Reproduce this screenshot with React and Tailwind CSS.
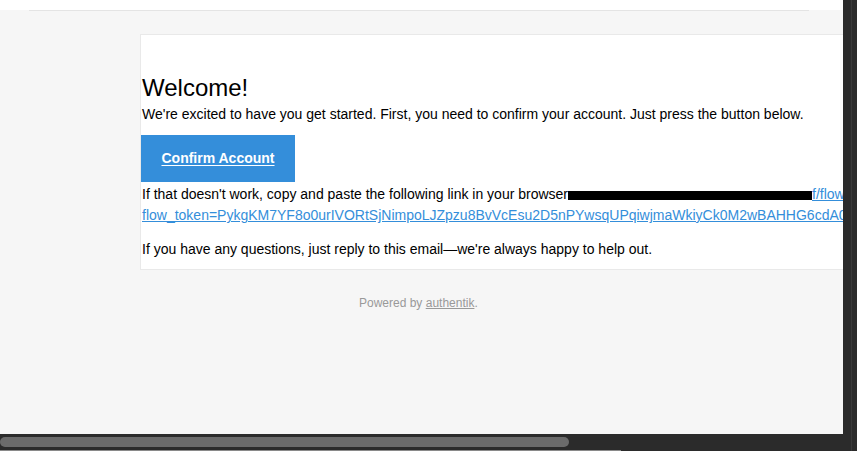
import React from 'react';

const font = { fontFamily: '"Liberation Sans", Arial, Helvetica, sans-serif' };

const App = () => {
  return (
    <div className="relative w-[857px] h-[451px] overflow-hidden bg-[#2b2b2b]" style={font}>
      {/* page viewport */}
      <div className="w-[843px] h-[434px] overflow-hidden bg-[#f6f6f6] flex flex-col">
        <div className="h-[10px] bg-white shrink-0"></div>
        <div className="ml-[29px] w-[780px] h-px bg-[#e4e4e4] shrink-0"></div>

        <div className="pt-[23px] pl-[140px] shrink-0">
          <div className="w-[760px] bg-white border border-[#e9e9e9] pt-[39px] pb-[9px] pl-px text-black whitespace-nowrap">
            <h1 className="text-[24px] leading-[28px] font-normal">Welcome!</h1>
            <p className="mt-[2px] text-[14px] leading-5">
              We're excited to have you get started. First, you need to confirm your account. Just press the button below.
            </p>
            <a
              href="#"
              className="mt-[11px] mb-[2px] -ml-px flex w-[154px] h-[47px] items-center justify-center bg-[#348eda] text-white text-[14px] font-bold underline underline-offset-2"
            >
              Confirm Account
            </a>
            <p className="text-[14px] leading-[21px]">
              If that doesn't work, copy and paste the following link in your browser
              <span className="inline-block align-[-1px] w-[244px] h-[9px] bg-black"></span>
              <a href="#" className="text-[#348eda] underline">f/flow/initial-setup/?</a>
              <br />
              <a href="#" className="text-[#348eda] underline">
                flow_token=PykgKM7YF8o0urIVORtSjNimpoLJZpzu8BvVcEsu2D5nPYwsqUPqiwjmaWkiyCk0M2wBAHHG6cdA0xQ
              </a>
            </p>
            <p className="mt-[13px] text-[14px] leading-[21px]">
              If you have any questions, just reply to this email—we're always happy to help out.
            </p>
          </div>
        </div>

        <div className="mt-[25px] ml-[359px] text-[12px] leading-4 text-[#999999] shrink-0">
          Powered by <a href="#" className="underline text-[#999999]">authentik</a>.
        </div>
      </div>

      {/* horizontal scrollbar */}
      <div className="absolute left-0 top-[434px] w-[843px] h-[17px] bg-[#2b2b2b]">
        <div className="mt-[3px] w-[569px] h-[10px] rounded-full bg-[#6b6b6b]"></div>
        <div className="absolute left-0 bottom-0 w-[621px] h-px bg-[#8a8a8a]"></div>
      </div>
      {/* right edge */}
      <div className="absolute right-0 top-0 w-[6px] h-[451px] border-l border-[#3a3a3a] rounded-br-[6px] bg-[#2b2b2b]"></div>
    </div>
  );
};

export default App;
